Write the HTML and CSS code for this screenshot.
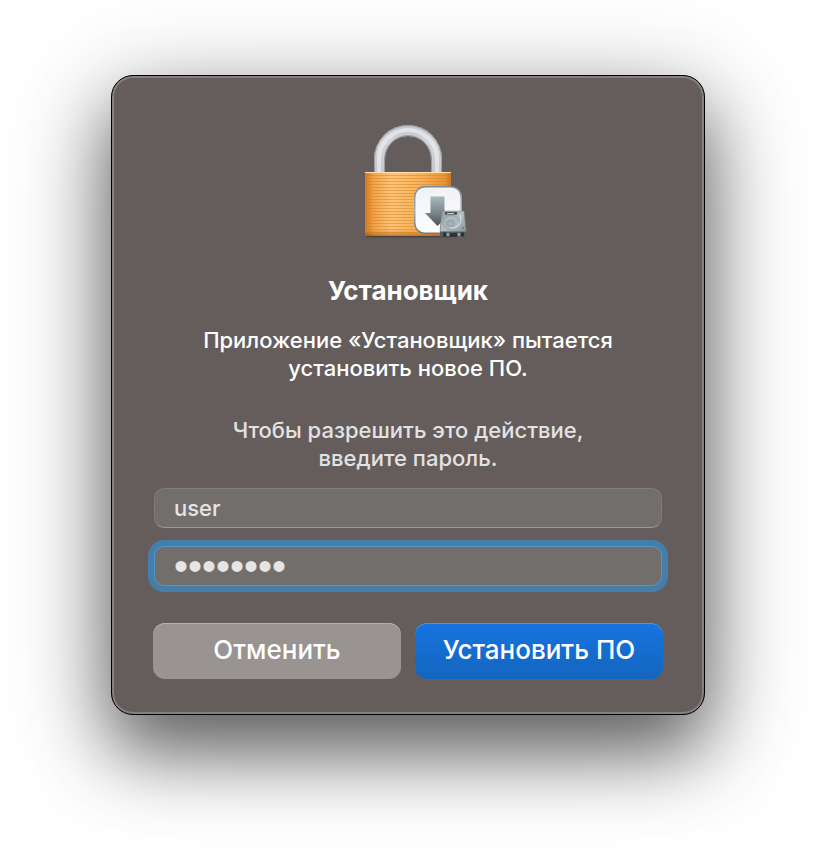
FILE: index.html
```html
<!DOCTYPE html>
<html lang="ru">
<head>
  <meta charset="UTF-8" />
  <meta name="viewport" content="width=device-width, initial-scale=1" />
  <title>Установщик</title>
  <link rel="stylesheet" href="styles.css">
</head>
<body>

<form class="dialog" role="dialog" aria-labelledby="dialogTitle">
  <svg class="lock" viewBox="0 0 120 120" aria-hidden="true">
    <defs>
      <linearGradient id="steel" x1="0" x2="0" y1="0" y2="1">
        <stop offset="0" stop-color="#c3c6cb" />
        <stop offset=".4" stop-color="#d2d4d9" />
        <stop offset="1" stop-color="#c4c7cd" />
      </linearGradient>
      <linearGradient id="brass" x1="0" x2="1" y1="0" y2="0">
        <stop offset="0" stop-color="#cf7a22" />
        <stop offset=".04" stop-color="#e08a30" />
        <stop offset=".1" stop-color="#f3a64e" />
        <stop offset=".3" stop-color="#ffca80" />
        <stop offset=".65" stop-color="#fab75e" />
        <stop offset=".93" stop-color="#e99437" />
        <stop offset="1" stop-color="#c77420" />
      </linearGradient>
      <linearGradient id="shade" x1="0" x2="0" y1="0" y2="1">
        <stop offset="0" stop-color="#d87a12" stop-opacity=".05" />
        <stop offset=".9" stop-color="#d87a12" stop-opacity=".1" />
        <stop offset="1" stop-color="#8a4300" stop-opacity=".6" />
      </linearGradient>
      <pattern id="lines" width="86" height="3" patternUnits="userSpaceOnUse">
        <rect width="86" height="1" fill="#d67f22" opacity=".5" />
      </pattern>
      <linearGradient id="rim" x1="0" x2="0" y1="0" y2="1">
        <stop offset="0" stop-color="#7d8a92" />
        <stop offset=".5" stop-color="#a5acb1" />
        <stop offset="1" stop-color="#6f777c" />
      </linearGradient>
      <linearGradient id="plate" x1="0" x2="0" y1="0" y2="1">
        <stop offset="0" stop-color="#f0f2f6" />
        <stop offset="1" stop-color="#fdfdfe" />
      </linearGradient>
      <linearGradient id="arrow" x1="0" x2="0" y1="0" y2="1">
        <stop offset="0" stop-color="#a7b8c0" />
        <stop offset=".6" stop-color="#788084" />
        <stop offset="1" stop-color="#4f5253" />
      </linearGradient>
      <linearGradient id="drive" x1="0" x2="1" y1="0" y2="1">
        <stop offset="0" stop-color="#8e999e" />
        <stop offset=".5" stop-color="#b4bfc4" />
        <stop offset="1" stop-color="#89949a" />
      </linearGradient>
    </defs>

    <!-- shackle -->
    <path d="M26 51V38a34 34 0 0 1 68 0v13H83V38a23 23 0 0 0-46 0v13z" fill="url(#steel)" />
    <path d="M26.500 51V38a33.500 33.500 0 0 1 67 0v13M36.500 51V38a23.500 23.500 0 0 1 47 0v13" fill="none" stroke="#999da4" />
    <path d="M31 51V38a29 29 0 0 1 58 0v13" fill="none" stroke="#e6e8ec" stroke-width="4" opacity=".8" />

    <!-- body -->
    <path d="M18 115h85v1.500H19z" fill="#3a3432" opacity=".6" />
    <rect x="17" y="51" width="86" height="64" rx="1.500" fill="url(#brass)" />
    <rect x="17" y="53" width="86" height="60" fill="url(#lines)" />
    <rect x="17" y="51" width="86" height="64" rx="1.500" fill="url(#shade)" />
    <path d="M17 51.500h86" stroke="#ffe0b0" />

    <!-- installer badge -->
    <rect x="66" y="65" width="48" height="48" rx="11" fill="url(#rim)" />
    <rect x="67.500" y="66.500" width="45" height="45" rx="9.500" fill="url(#plate)" />
    <path d="M82.500 75.500h14V92h6.500L89.500 105 77 92h5.500z" fill="url(#arrow)" />

    <!-- disk -->
    <path d="M94 90h22l2 20v5.500H92V110z" fill="#555d61" />
    <path d="M94 90h22l2 20.500H92z" fill="url(#drive)" stroke="#7b868b" stroke-width=".5" />
    <path d="M97 91.200h12v2.300H97z" fill="#3b4144" />
    <path d="M99 92h7v1h-7z" fill="#c4ccd0" />
    <ellipse cx="103.500" cy="101.500" rx="8.500" ry="7" fill="#adb9be" stroke="#8c989d" stroke-width=".7" />
    <ellipse cx="102.500" cy="102.500" rx="4" ry="3" fill="#a3b0b6" stroke="#89959a" stroke-width=".8" />
    <path d="M112 92.500c1.500 5 1.500 9-2 12.500-3 2.500-6 2.500-8 1.500" fill="none" stroke="#d3dcdf" stroke-width="1.200" />
    <circle cx="115" cy="107" r="1" fill="#6f7b80" />
    <path d="M95 111.500h3v4h-3zM102 112h7v4h-7zM113 111.500h3v4h-3z" fill="#2e3335" />
    <path d="M99 112h2v3h-2zM110 112h2v3h-2z" fill="#9aa4a8" />
  </svg>

  <h1 id="dialogTitle">Установщик</h1>
  <p class="message">Приложение «Установщик» пытается<br>установить новое ПО.</p>
  <p class="hint">Чтобы разрешить это действие,<br>введите пароль.</p>

  <div class="fields">
    <input type="text" id="userInput" value="user" aria-label="Имя пользователя">
    <input type="password" id="passwordInput" class="focused" value="password" aria-label="Пароль">
  </div>

  <div class="buttons">
    <button type="button" id="cancelBtn">Отменить</button>
    <button type="button" id="installBtn">Установить ПО</button>
  </div>
</form>

</body>
</html>
```
FILE: styles.css
```css
* {
  box-sizing: border-box;
}
body {
  min-height: 100vh;
  margin: 0;
  padding: 75px 16px 120px;
  background: white;
  font-family: Inter, "Liberation Sans", sans-serif;
  overflow-x: hidden;
}
.dialog {
  display: flex;
  flex-direction: column;
  max-width: 594px;
  margin: 0 auto;
  padding: 45px 41px 35px;
  border: 1px solid #000;
  border-radius: 22px;
  background: #645d5c;
  box-shadow: inset 0 0 0 2px #85807f, 0 36px 70px rgba(0,0,0,0.5), 0 24px 110px rgba(0,0,0,0.3);
  color: white;
  text-align: center;
}
.lock {
  align-self: center;
  width: 120px;
  height: 120px;
}
h1 {
  margin: 34px 0 0;
  font-size: 26px;
  line-height: 32px;
  font-weight: 700;
}
p {
  margin: 0;
  font-size: 22px;
  line-height: 28px;
  font-weight: 500;
}
.message {
  margin-top: 19px;
}
.hint {
  margin-top: 34px;
  color: #e3e2e2;
}
.fields {
  display: flex;
  flex-direction: column;
  gap: 18px;
  margin: 16px 1px 0;
}
input {
  width: 100%;
  height: 40px;
  padding: 0 19px;
  border: 1px solid #7f7b7a;
  border-bottom-color: #9a9796;
  border-radius: 10px;
  outline: none;
  background: #726e6c;
  color: #e6e5e5;
  font-family: inherit;
  font-size: 22px;
  font-weight: 450;
}
input[type="password"] {
  font-family: "Liberation Sans", sans-serif;
  font-size: 40px;
  font-weight: 400;
  line-height: 38px;
}
input.focused {
  border-color: #5495c8;
  box-shadow: 0 0 0 6px #447fab;
}
.buttons {
  display: flex;
  gap: 14px;
  margin-top: 37px;
}
button {
  flex: 1;
  height: 56px;
  padding: 0 0 4px;
  border: none;
  border-radius: 12px;
  background: #999392;
  box-shadow: inset 0 1px 0 #b5b0af;
  color: white;
  font-family: inherit;
  font-size: 26px;
  font-weight: 450;
  white-space: nowrap;
  cursor: pointer;
}
#installBtn {
  background: linear-gradient(#1674e0, #1465bf);
  box-shadow: inset 0 1px 0 #4a93e6;
}
@media (max-width: 560px) {
  .dialog {
    padding-left: 20px;
    padding-right: 20px;
  }
  .buttons {
    flex-direction: column;
  }
  button {
    flex: none;
  }
}
```
